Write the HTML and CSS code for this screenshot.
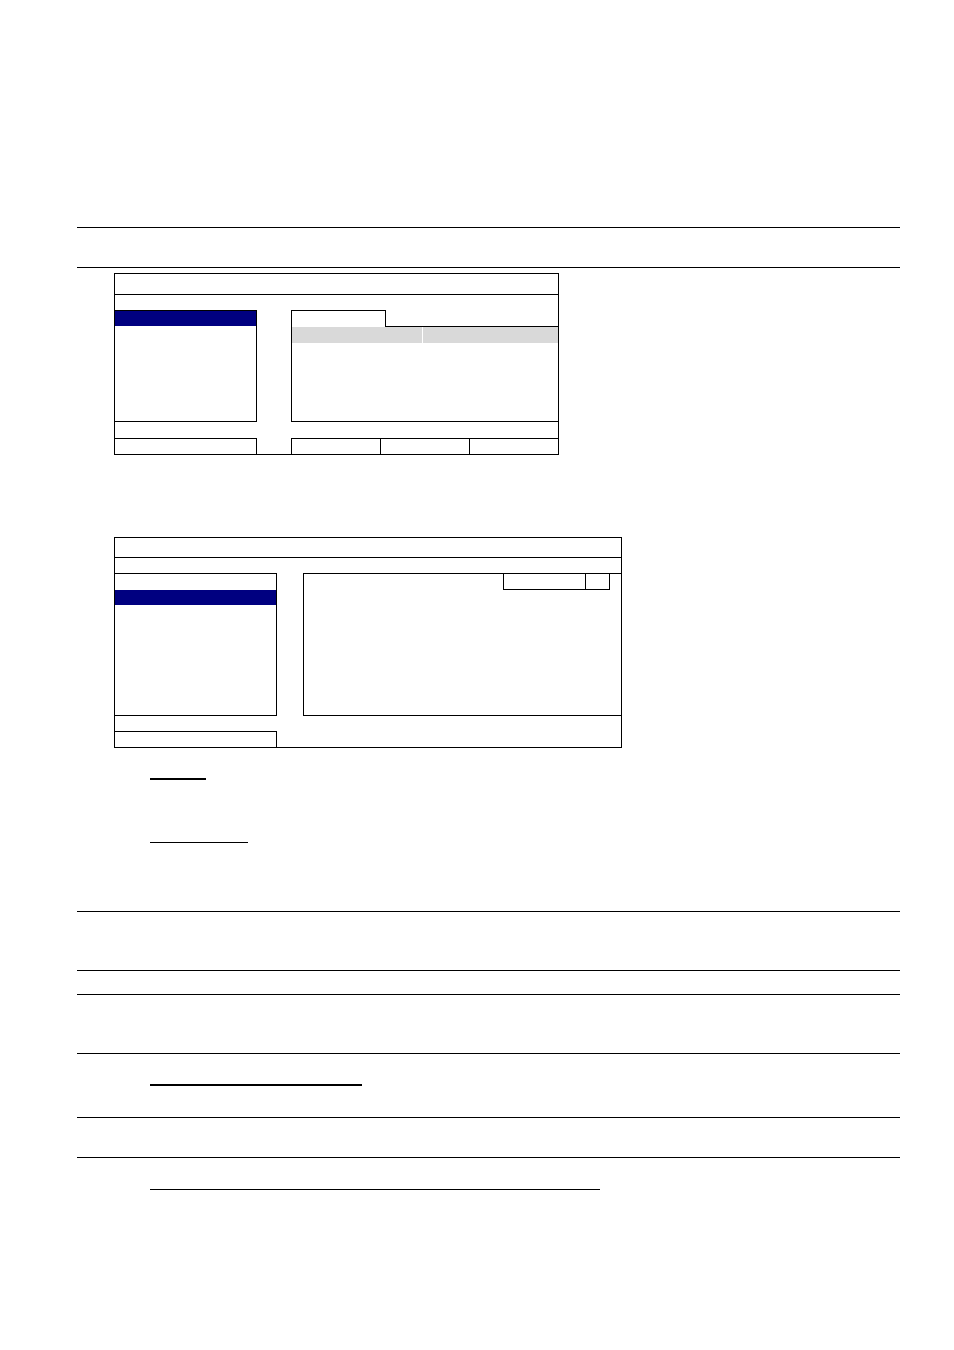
FILE: index.html
```html
<!DOCTYPE html>
<html lang="en">
<head>
<meta charset="utf-8">
<title>Menu layout</title>
<link rel="stylesheet" href="styles.css">
</head>
<body>
<div class="page">
  <div class="rule"></div>
  <div class="rule r267"></div>

  <div class="dlg dlg1">
    <div class="title t1"></div>
    <div class="main m1">
      <div class="list l1"><div class="hl"></div></div>
      <div class="panel p1">
        <div class="tabs">
          <div class="tab"></div>
          <div class="tabfill"></div>
        </div>
        <div class="hdr">
          <div class="hc hc1"></div>
          <div class="hc hc2"></div>
        </div>
      </div>
    </div>
    <div class="btns">
      <div class="btn bl1"></div>
      <div class="btn br first"></div>
      <div class="btn br"></div>
      <div class="btn br"></div>
    </div>
  </div>

  <div class="dlg dlg2">
    <div class="title t2"></div>
    <div class="main m2">
      <div class="list l2"><div class="item"></div><div class="hl"></div></div>
      <div class="panel p2">
        <div class="pbar">
          <div class="pbox pb1"></div>
          <div class="pbox pb2"></div>
        </div>
      </div>
    </div>
    <div class="btns">
      <div class="btn bl2"></div>
    </div>
  </div>

  <div class="ul u1"></div>
  <div class="ul u2"></div>
  <div class="rule r911"></div>
  <div class="rule r970"></div>
  <div class="rule r994"></div>
  <div class="rule r1053"></div>
  <div class="ul u3"></div>
  <div class="rule r1117"></div>
  <div class="rule r1157"></div>
  <div class="ul u4"></div>
</div>
</body>
</html>
```
FILE: styles.css
```css
html, body {
  margin: 0;
  padding: 0;
  background: #ffffff;
  font-family: "Liberation Sans", Arial, sans-serif;
}

.page {
  width: 823px;
  margin-left: 77px;
  padding-top: 227px;
}

.rule {
  height: 1px;
  background: #000;
}
.r267 { margin-top: 39px; }
.r911 { margin-top: 68px; }
.r970 { margin-top: 58px; }
.r994 { margin-top: 23px; }
.r1053 { margin-top: 58px; }
.r1117 { margin-top: 31px; }
.r1157 { margin-top: 39px; }

.ul {
  margin-left: 73px;
  background: #000;
}
.u1 { margin-top: 30px; width: 56px; height: 2px; }
.u2 { margin-top: 62px; width: 98px; height: 1px; }
.u3 { margin-top: 30px; width: 212px; height: 2px; }
.u4 { margin-top: 31px; width: 450px; height: 1px; }

/* dialogs */
.dlg {
  box-sizing: border-box;
  border: 1px solid #000;
  margin-left: 37px;
  background: #fff;
}
.dlg1 { width: 445px; margin-top: 5px; }
.dlg2 { width: 508px; margin-top: 82px; }

.title { border-bottom: 1px solid #000; }
.t1 { height: 20px; }
.t2 { height: 19px; }

.main {
  display: flex;
  margin: 15px -1px 0;
}

.list {
  box-sizing: border-box;
  border: 1px solid #000;
}
.l1 { width: 143px; height: 112px; }
.l2 { width: 163px; height: 143px; }

.item { height: 16px; }
.hl {
  height: 15px;
  background: #000080;
}

.panel {
  flex: 1;
  box-sizing: border-box;
  border: 1px solid #000;
}
.p1 {
  margin-left: 34px;
  height: 112px;
  border-top: 0;
}
.p2 {
  margin-left: 26px;
  height: 143px;
}

.tabs {
  display: flex;
  height: 17px;
}
.tab {
  box-sizing: border-box;
  width: 94px;
  border-top: 1px solid #000;
  border-right: 1px solid #000;
}
.tabfill {
  flex: 1;
  box-sizing: border-box;
  border-bottom: 1px solid #000;
}

.hdr {
  display: flex;
  gap: 1px;
  height: 16px;
}
.hc { background: #d9d9d9; }
.hc1 { width: 130px; }
.hc2 { flex: 1; }

.pbar {
  display: flex;
  justify-content: flex-end;
  margin-top: -1px;
  padding-right: 11px;
}
.pbox {
  box-sizing: border-box;
  height: 17px;
  border: 1px solid #000;
}
.pb1 { width: 83px; }
.pb2 { width: 25px; margin-left: -1px; }

.btns {
  display: flex;
  margin: 16px -1px -1px;
}
.dlg2 .btns { margin-top: 15px; }
.btn {
  box-sizing: border-box;
  height: 17px;
  border: 1px solid #000;
}
.bl1 { width: 143px; }
.bl2 { width: 163px; }
.br { width: 90px; margin-left: -1px; }
.br.first { margin-left: 34px; }
```
